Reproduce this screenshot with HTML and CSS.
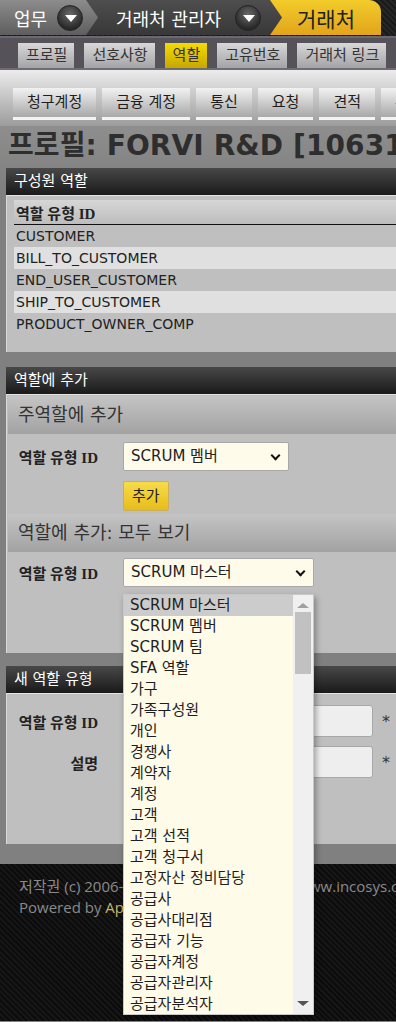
FILE: index.html
```html
<!DOCTYPE html>
<html>
<head>
    <meta charset="UTF-8">
    <title>거래처 - 역할</title>
    <link rel="stylesheet" href="styles.css">
</head>
<body>

    <div class="app-nav">
        <div class="app-tab first">업무 <span class="drop-btn"></span></div>
        <div class="app-tab second">거래처 관리자 <span class="drop-btn"></span></div>
        <div class="app-tab current">거래처</div>
    </div>

    <div class="sub-nav">
        <span class="sub-tab">프로필</span>
        <span class="sub-tab">선호사항</span>
        <span class="sub-tab selected">역할</span>
        <span class="sub-tab">고유번호</span>
        <span class="sub-tab">거래처 링크</span>
    </div>

    <div class="button-bar">
        <span class="bar-btn">청구계정</span>
        <span class="bar-btn">금융 계정</span>
        <span class="bar-btn">통신</span>
        <span class="bar-btn">요청</span>
        <span class="bar-btn">견적</span>
        <span class="bar-btn">주문</span>
    </div>

    <div class="content">
        <h1 class="page-title">프로필: FORVI R&amp;D [10631]</h1>

        <div class="panel members">
            <div class="panel-title">구성원 역할</div>
            <div class="panel-body">
                <table class="basic-table">
                    <tr class="header-row"><td>역할 유형 ID</td></tr>
                    <tr><td>CUSTOMER</td></tr>
                    <tr class="alt"><td>BILL_TO_CUSTOMER</td></tr>
                    <tr><td>END_USER_CUSTOMER</td></tr>
                    <tr class="alt"><td>SHIP_TO_CUSTOMER</td></tr>
                    <tr><td>PRODUCT_OWNER_COMP</td></tr>
                </table>
            </div>
        </div>

        <div class="panel add-role">
            <div class="panel-title">역할에 추가</div>
            <div class="panel-body">
                <h3 class="sub-head">주역할에 추가</h3>
                <div class="form-row">
                    <span class="label">역할 유형 ID</span>
                    <span class="select short">SCRUM 멤버</span>
                </div>
                <div class="form-row submit-row">
                    <span class="smallSubmit">추가</span>
                </div>
                <h3 class="sub-head second">역할에 추가: 모두 보기</h3>
                <div class="form-row">
                    <span class="label">역할 유형 ID</span>
                    <span class="select long">SCRUM 마스터</span>
                </div>
                <div class="panel-fill"></div>
            </div>
        </div>

        <div class="panel new-role">
            <div class="panel-title">새 역할 유형</div>
            <div class="panel-body">
                <div class="form-row">
                    <span class="label">역할 유형 ID</span>
                    <span class="input"></span>
                    <span class="required">*</span>
                </div>
                <div class="form-row">
                    <span class="label">설명</span>
                    <span class="input"></span>
                    <span class="required">*</span>
                </div>
                <div class="panel-fill"></div>
            </div>
        </div>
    </div>

    <div class="footer">
        <div>저작권 (c) 2006-2024 (주)인코시스 솔루션 - www.incosys.co.kr</div>
        <div>Powered by <span class="footer-link">Apache OFBiz</span></div>
    </div>

    <!-- open select list of the second form -->
    <div class="dropdown-list">
        <div class="options">
            <div class="option active">SCRUM 마스터</div>
            <div class="option">SCRUM 멤버</div>
            <div class="option">SCRUM 팀</div>
            <div class="option">SFA 역할</div>
            <div class="option">가구</div>
            <div class="option">가족구성원</div>
            <div class="option">개인</div>
            <div class="option">경쟁사</div>
            <div class="option">계약자</div>
            <div class="option">계정</div>
            <div class="option">고객</div>
            <div class="option">고객 선적</div>
            <div class="option">고객 청구서</div>
            <div class="option">고정자산 정비담당</div>
            <div class="option">공급사</div>
            <div class="option">공급사대리점</div>
            <div class="option">공급자 기능</div>
            <div class="option">공급자계정</div>
            <div class="option">공급자관리자</div>
            <div class="option">공급자분석자</div>
        </div>
        <div class="scrollbar">
            <span class="arrow up"></span>
            <span class="thumb"></span>
            <span class="arrow down"></span>
        </div>
    </div>

</body>
</html>
```

FILE: styles.css
```css
html {
    overflow-x: hidden;
}

body {
    margin: 0;
    width: 640px;
    font-family: "DejaVu Sans", "Noto Sans CJK KR", sans-serif;
    font-size: 13px;
    color: #222;
    background-color: #808080;
    position: relative;
}

/* application tabs */
.app-nav {
    display: flex;
    height: 36px;
    background-color: #1e1e1e;
    background-image: repeating-linear-gradient(45deg, #262626 0 2px, #1a1a1a 2px 4px);
    border-bottom: 2px solid #6a6870;
}

.app-tab {
    display: flex;
    align-items: center;
    gap: 10px;
    height: 35px;
    font-size: 18px;
    color: #fff;
    clip-path: polygon(0 0, calc(100% - 12px) 0, 100% 50%, calc(100% - 12px) 100%, 0 100%);
}

.app-tab.first {
    position: relative;
    z-index: 3;
    width: 84px;
    padding-left: 14px;
    background: linear-gradient(#8c8c8c, #5e5e5e);
}

.app-tab.second {
    position: relative;
    z-index: 2;
    margin-left: -12px;
    width: 166px;
    padding-left: 30px;
    gap: 14px;
    background: linear-gradient(#4e4e4e, #383838);
}

.app-tab.current {
    position: relative;
    z-index: 1;
    margin-left: -12px;
    width: 84px;
    padding-left: 27px;
    font-size: 21px;
    color: #222;
    background: linear-gradient(#f2cc2a, #e2a41c);
    clip-path: none;
    border-top-right-radius: 12px;
}

.drop-btn {
    width: 26px;
    height: 26px;
    border-radius: 50%;
    background: radial-gradient(circle at 50% 35%, #6a6a6a, #2a2a2a 70%);
    border: 1px solid #222;
    box-sizing: border-box;
    position: relative;
}

.drop-btn::after {
    content: "";
    position: absolute;
    left: 7px;
    top: 9px;
    border-left: 6px solid transparent;
    border-right: 6px solid transparent;
    border-top: 7px solid #fff;
}

/* second level tabs */
.sub-nav {
    display: flex;
    gap: 10px;
    height: 30px;
    padding-left: 18px;
    align-items: flex-end;
    background-color: #56525a;
    border-bottom: 2px solid #6e6c72;
}

.sub-tab {
    height: 25px;
    line-height: 25px;
    padding: 0 7px 0 8px;
    font-size: 15px;
    color: #333;
    background: linear-gradient(#d8d8d8, #a4a4a8);
}

.sub-tab.selected {
    background: linear-gradient(#f4dc00, #c8a600);
}

/* button bar */
.button-bar {
    display: flex;
    gap: 6px;
    height: 38px;
    padding: 18px 0 0 13px;
    background: linear-gradient(#ececec, #9c9c9c);
}

.bar-btn {
    height: 29px;
    line-height: 29px;
    padding: 0 14px;
    font-size: 15px;
    color: #1e1e1e;
    background: linear-gradient(#f2f2f2, #a8a8a8);
    border-bottom: 3px solid #f4f4f4;
}

/* main */
.content {
    padding: 0 0 20px 6px;
    background: linear-gradient(#8e8e8e, #808080 60px);
}

.page-title {
    margin: 0;
    padding: 4px 0 6px 2px;
    font-size: 28px;
    letter-spacing: 0.1px;
    line-height: 32px;
    color: #2e2e2e;
    white-space: nowrap;
}

.panel.members {
    margin-bottom: 15px;
}

.panel.add-role {
    margin-bottom: 13px;
}

.panel-title {
    height: 27px;
    line-height: 27px;
    padding-left: 8px;
    font-size: 15px;
    color: #fff;
    background: linear-gradient(#484848, #1a1a1a);
}

.panel-body {
    background-color: #bfbfbf;
    border-top: 1px solid #e4e4e4;
    border-left: 1px solid #d8d8d8;
    padding: 1px 0 0 1px;
}

.members .panel-body {
    padding: 4px 0 17px 1px;
}

.basic-table {
    border-collapse: collapse;
    width: 100%;
}

.basic-table td {
    height: 22px;
    padding: 0 0 0 2px;
    font-size: 14px;
    border-left: 6px solid #bfbfbf;
}

.basic-table .header-row td {
    height: 24px;
    font-family: "Liberation Serif", "Noto Sans CJK KR", serif;
    font-weight: bold;
    font-size: 15px;
    background: linear-gradient(#d6d6d6, #bdbdbd);
    border-bottom: 1px solid #111;
}

.basic-table .alt td {
    background-color: #e0e0e0;
}

.sub-head {
    margin: 0;
    height: 38px;
    line-height: 38px;
    padding-left: 10px;
    font-size: 18px;
    font-weight: normal;
    color: #333;
    background: linear-gradient(#c4c4c4, #a2a2a2);
}

.sub-head.second {
    margin-top: 3px;
}

.form-row {
    display: flex;
    align-items: center;
    margin-top: 8px;
}

.sub-head.second + .form-row {
    margin-top: 6px;
}

.submit-row {
    margin-top: 10px;
    padding-left: 115px;
}

.new-role .form-row {
    margin-top: 9px;
}

.new-role .form-row:first-child {
    margin-top: 10px;
}

.label {
    width: 81px;
    margin-left: 9px;
    margin-right: 25px;
    text-align: right;
    font-family: "Liberation Serif", "Noto Sans CJK KR", serif;
    font-weight: bold;
    font-size: 15px;
    color: #222;
}

.select {
    box-sizing: border-box;
    height: 29px;
    line-height: 27px;
    padding-left: 7px;
    font-size: 15px;
    background-color: #fffbea;
    border: 1px solid #a8a8a8;
    border-radius: 2px;
    position: relative;
}

.select::after {
    content: "";
    position: absolute;
    right: 9px;
    top: 9px;
    width: 5px;
    height: 5px;
    border-right: 2px solid #111;
    border-bottom: 2px solid #111;
    transform: rotate(45deg);
}

.select.short {
    width: 166px;
}

.select.long {
    width: 191px;
}

.smallSubmit {
    box-sizing: border-box;
    height: 30px;
    line-height: 28px;
    padding: 0 8px;
    font-size: 15px;
    color: #222;
    background: linear-gradient(#f8dc48, #e6bc1c);
    border: 1px solid #c8b060;
    border-radius: 2px;
}

.input {
    box-sizing: border-box;
    width: 250px;
    height: 32px;
    background-color: #eeeeee;
    border: 1px solid #a8a8a8;
    border-radius: 3px;
}

.required {
    margin-left: 9px;
    font-size: 16px;
    color: #333;
}

.panel-fill {
    height: 66px;
}

/* footer */
.footer {
    height: 157px;
    padding: 12px 0 0 19px;
    box-sizing: border-box;
    font-family: "Open Sans", "Noto Sans CJK KR", sans-serif;
    font-size: 15px;
    line-height: 21px;
    color: #8a8a8a;
    white-space: nowrap;
    background-color: #0a0a0a;
    background-image: repeating-linear-gradient(45deg, #161616 0 2px, #0c0c0c 2px 4px);
}

.footer-link {
    color: #c6b46a;
}

/* dropdown of the open select */
.dropdown-list {
    position: absolute;
    left: 123px;
    top: 594px;
    width: 191px;
    height: 421px;
    display: flex;
    background-color: #fffbe9;
    border: 1px solid #c8c8c8;
    box-sizing: border-box;
    box-shadow: 2px 3px 6px rgba(0, 0, 0, 0.35);
}

.options {
    flex: 1;
}

.option {
    height: 21px;
    line-height: 21px;
    padding-left: 6px;
    font-size: 15px;
    color: #1e1e1e;
    white-space: nowrap;
}

.option.active {
    background-color: #cccccc;
}

.scrollbar {
    width: 20px;
    display: flex;
    flex-direction: column;
    align-items: center;
    background-color: #f0f0f0;
}

.arrow {
    width: 0;
    height: 0;
    border-left: 6px solid transparent;
    border-right: 6px solid transparent;
    margin: 8px 0;
}

.arrow.up {
    border-bottom: 5px solid #a0a0a0;
}

.arrow.down {
    margin-top: auto;
    margin-bottom: 8px;
    border-top: 5px solid #555;
}

.thumb {
    width: 16px;
    height: 62px;
    margin-top: -4px;
    background-color: #c1c1c1;
}
```
